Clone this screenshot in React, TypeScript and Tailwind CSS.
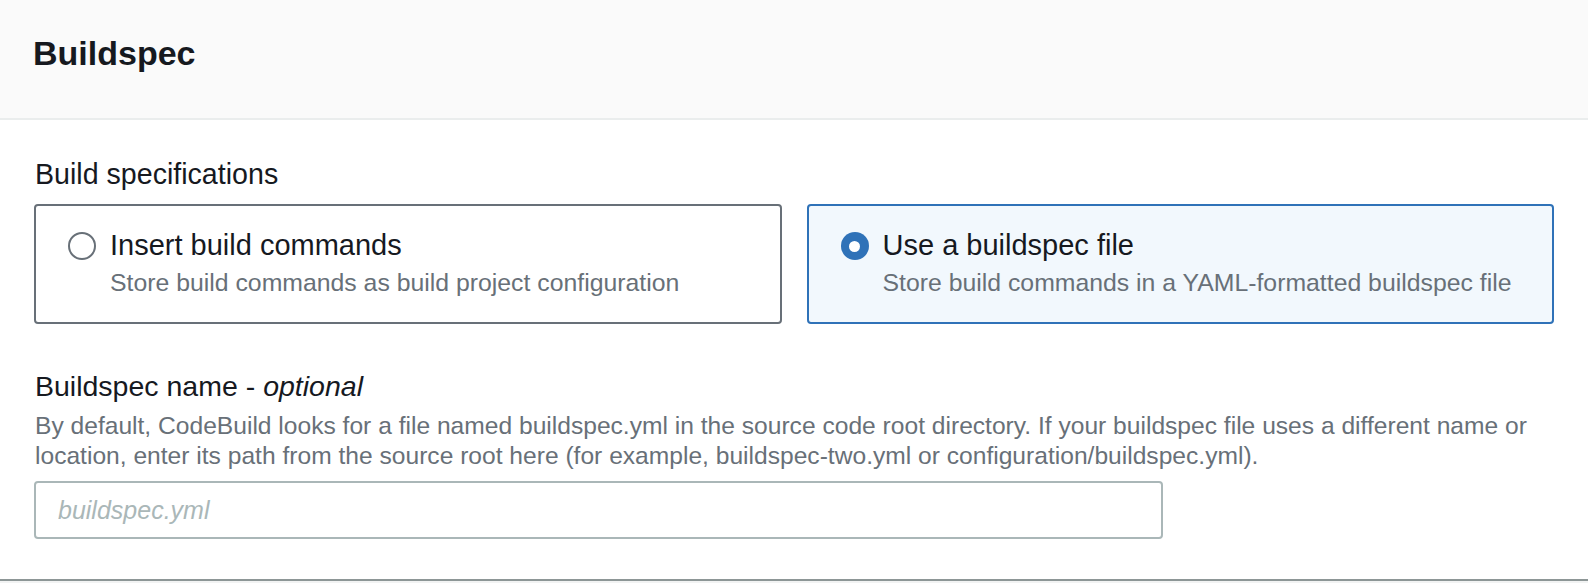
import React from "react";

function Radio({ checked }: { checked: boolean }) {
  return checked ? (
    <span className="mt-[5px] flex h-[28px] w-[28px] shrink-0 items-center justify-center rounded-full bg-[#2f72b8]">
      <span className="h-[11px] w-[11px] rounded-full bg-white" />
    </span>
  ) : (
    <span className="mt-[5px] block h-[28px] w-[28px] shrink-0 rounded-full border-2 border-[#687078] bg-white" />
  );
}

function Tile({
  checked,
  title,
  desc,
}: {
  checked: boolean;
  title: string;
  desc: string;
}) {
  return (
    <div
      className={
        checked
          ? "flex h-[120px] gap-[14px] rounded-[4px] border-2 border-[#2f72b8] bg-[#f2f8fd] pl-[32px] pt-[21px]"
          : "flex h-[120px] gap-[14px] rounded-[4px] border-2 border-[#687078] bg-white pl-[32px] pt-[21px]"
      }
    >
      <Radio checked={checked} />
      <div className="flex flex-col">
        <div className="text-[29px] leading-[36px] text-[#16191f]">{title}</div>
        <div className="mt-[5px] text-[24.8px] leading-[30px] text-[#687078]">{desc}</div>
      </div>
    </div>
  );
}

export default function App() {
  return (
    <div
      className="w-[1588px] bg-[#f2f3f3]"
      style={{ fontFamily: '"Liberation Sans", Arial, sans-serif' }}
    >
      <div className="border-b-2 border-[#8d9696] bg-white">
        <div className="h-[120px] border-b-2 border-[#eaeded] bg-[#fafafa] px-[33px] pt-[31px]">
          <h2 className="text-[34px] font-bold leading-[44px] text-[#16191f]">Buildspec</h2>
        </div>
        <div className="px-[34px] pb-[40px] pt-[36px]">
          <div className="pl-[1px] text-[28.6px] leading-[36px] text-[#16191f]">Build specifications</div>
          <div className="mt-[12px] grid grid-cols-2 gap-[25px]">
            <Tile
              checked={false}
              title="Insert build commands"
              desc="Store build commands as build project configuration"
            />
            <Tile
              checked={true}
              title="Use a buildspec file"
              desc="Store build commands in a YAML-formatted buildspec file"
            />
          </div>
          <div className="mt-[44px] pl-[1px] text-[28.5px] leading-[36px] text-[#16191f]">
            Buildspec name - <i>optional</i>
          </div>
          <p className="mt-[7px] pl-[1px] text-[24.6px] leading-[30px] text-[#687078]">
            By default, CodeBuild looks for a file named buildspec.yml in the source code root directory. If your
            buildspec file uses a different name or location, enter its path from the source root here (for example,
            buildspec-two.yml or configuration/buildspec.yml).
          </p>
          <input
            className="mt-[10px] block h-[58px] w-[1129px] rounded-[4px] border-2 border-[#aab7b8] bg-white pl-[22px] text-[25px] italic text-[#16191f] outline-none placeholder:text-[#aab7b8]"
            placeholder="buildspec.yml"
            style={{ fontFamily: '"Liberation Sans", Arial, sans-serif' }}
          />
        </div>
      </div>
      <div className="h-[2px]" />
    </div>
  );
}
